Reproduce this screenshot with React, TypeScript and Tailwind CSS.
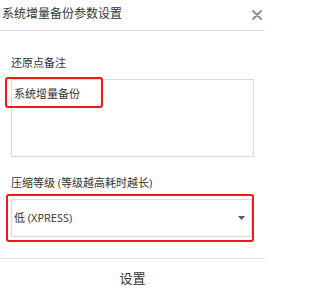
const font = { fontFamily: '"Open Sans", "Noto Sans CJK SC", sans-serif' };

const BackupSettings = () => {
  return (
    <div className="relative w-[265px] h-[296px] bg-white text-[#333] flex flex-col overflow-hidden" style={font}>
      {/* 标题栏 */}
      <div className="h-[31px] shrink-0 flex items-center justify-between border-b border-[#e3e3e3] pl-[2px] pr-[3px]">
        <span className="text-[12px] leading-[16px] -mt-[2px]">系统增量备份参数设置</span>
        <svg width="10" height="10" viewBox="0 0 10 10" className="-mt-[1px]">
          <path d="M1 1L9 9M9 1L1 9" stroke="#8a8a8a" strokeWidth="1.8" strokeLinecap="round" />
        </svg>
      </div>

      {/* 表单 */}
      <div className="flex-1 flex flex-col px-[11px]">
        <label className="mt-[24px] text-[11px] leading-[16px]">还原点备注</label>
        <div className="mt-[8px] w-[243px] h-[78px] border border-[#dcdcdc] pt-[6px] px-[2px] text-[11px] leading-[16px]">
          系统增量备份
        </div>

        <label className="mt-[18px] text-[11px] leading-[16px]">压缩等级 (等级越高耗时越长)</label>
        <div className="mt-[8px] w-[241px] h-[38px] border border-[#dcdcdc] flex items-center justify-between pl-[2px] pr-[6px] text-[11px]">
          <span>低 (XPRESS)</span>
          <svg width="7" height="4" viewBox="0 0 7 4">
            <path d="M0 0H7L3.5 4Z" fill="#4f5b66" />
          </svg>
        </div>
      </div>

      {/* 按钮 */}
      <div className="h-[38px] shrink-0 border-t border-[#e3e3e3] flex items-center justify-center">
        <button className="text-[13px] leading-[16px] text-[#333]">设置</button>
      </div>

      {/* 标注框 */}
      <div className="absolute left-[5px] top-[77px] w-[98px] h-[31px] border-2 border-[#f01818] rounded-[3px]" />
      <div className="absolute left-[6px] top-[194px] w-[248px] h-[48px] border-2 border-[#f01818] rounded-[3px]" />
    </div>
  );
};

export default function App() {
  return <BackupSettings />;
}
